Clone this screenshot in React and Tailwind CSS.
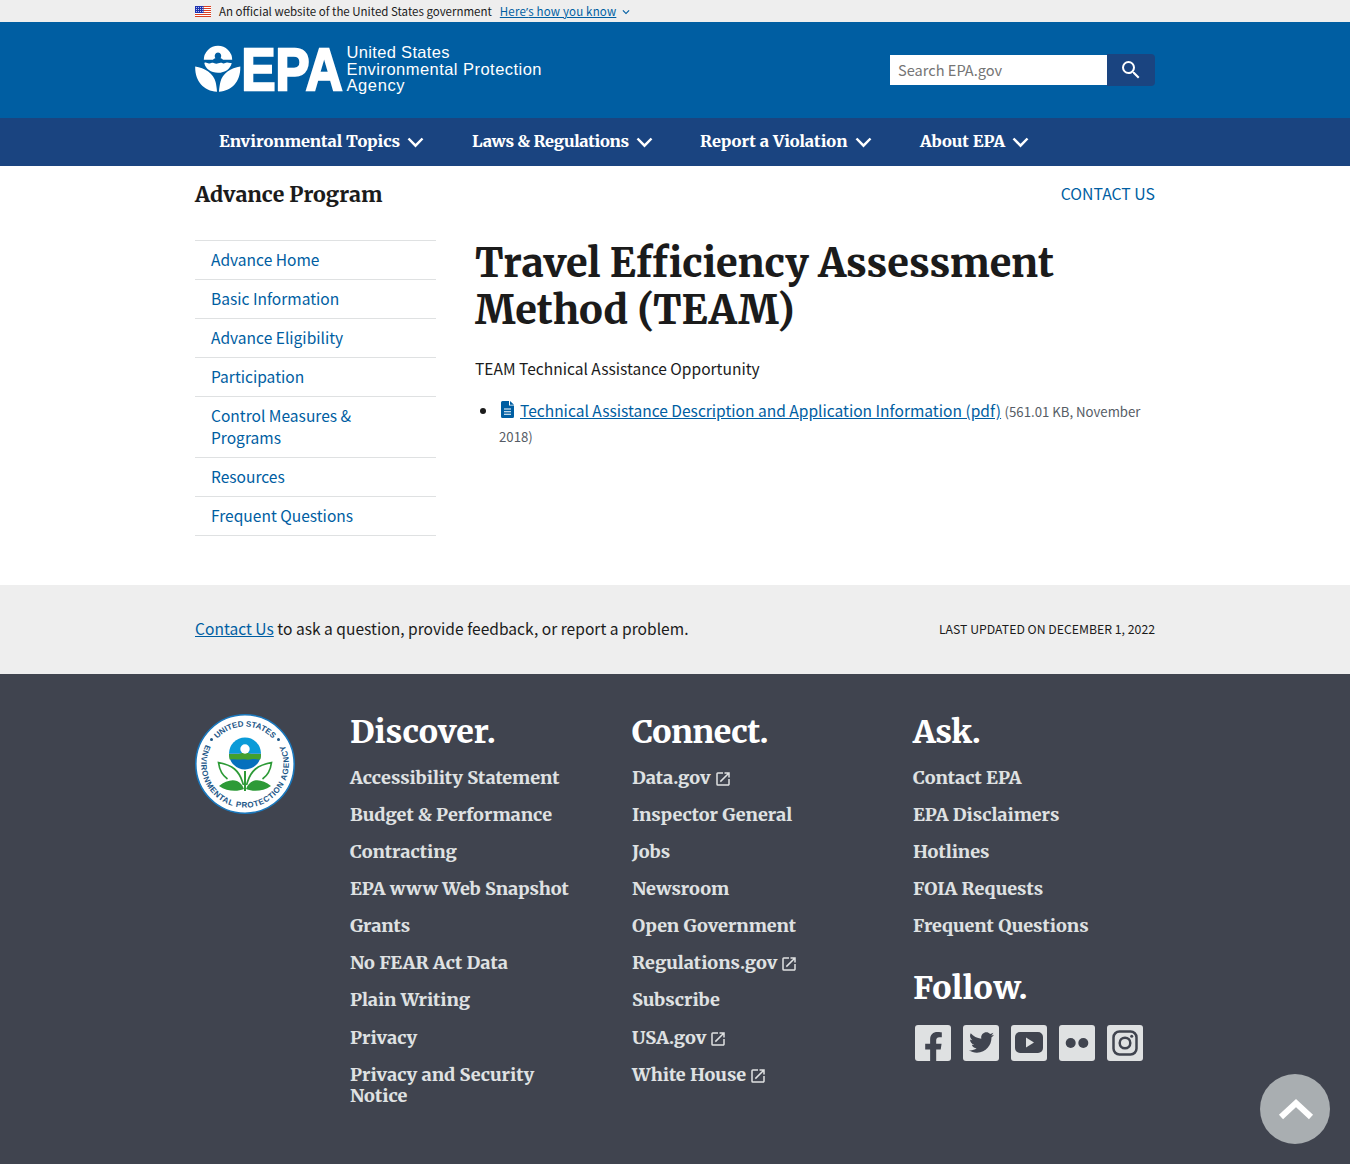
import { FaFacebookF, FaTwitter } from 'react-icons/fa';
import { MdLaunch, MdSearch, MdExpandMore } from 'react-icons/md';

const sans = 'font-["Noto_Sans_CJK_SC","Noto_Sans",sans-serif]';
const serif = 'font-[Merriweather,"DejaVu_Serif_Condensed",serif] font-extrabold';

function Flag() {
  return (
    <svg width="16" height="11" viewBox="0 0 16 11" aria-hidden="true">
      <rect width="16" height="11" fill="#fff" />
      {[0, 2, 4, 6, 8, 10].map((y) => (
        <rect key={y} y={y} width="16" height="1" fill="#db3e1f" />
      ))}
      <rect width="8.5" height="7" fill="#1e33b1" />
      {[1, 3, 5].map((y) => (
        <path key={y} d={`M1 ${y + 0.5}h7`} stroke="#fff" strokeWidth="0.8" strokeDasharray="0.9 1.1" />
      ))}
    </svg>
  );
}

function Logo() {
  return (
    <svg width="350" height="54" viewBox="195 43 350 54" role="img" aria-label="EPA" fill="#fff">
      <path d="M203.800 59.800a14.200 14 0 0 1 28.400 0h-9.200c-.6-1.100-1.300-1.500-2.400-1.600 1.500-2.400.2-5.600-2.600-5.600s-4.100 3.200-2.600 5.600c-1.100.1-1.800.5-2.400 1.600z" />
      <path d="M204.300 63c2-1.300 3.100.9 5.200.5s2.400-1.200 4.200-.5 3 .9 4.600.3 2.600-.8 4.400-.1 3-.9 4.500-.6 2.500.6 4.500.3c-1.300 6-6.600 9.800-13.700 9.800s-12.500-3.700-13.700-9.700z" />
      <path d="M195.200 66.500c9.300 1.200 18.600 7 20.400 15.500.7 3.100 1.200 6 1.400 9.800-13.600-1-22.200-11-21.800-25.300zM240.300 66.500c-9.300 1.200-18.100 7-19.900 15.500-.7 3.100-1.200 6-1.400 9.800 13.600-1 21.700-11 21.300-25.300z" />
      <text x="241.500" y="89.800" fontFamily="'Liberation Sans', Arial, sans-serif" fontWeight="700" fontSize="60" stroke="#fff" strokeWidth="2.400" textLength="101" lengthAdjust="spacingAndGlyphs">EPA</text>
      <g fontFamily="'Liberation Sans', Arial, sans-serif" fontSize="16.500">
        <text x="346.500" y="58.300" textLength="103">United States</text>
        <text x="346.500" y="74.700" textLength="195">Environmental Protection</text>
        <text x="346.500" y="91.200" textLength="58">Agency</text>
      </g>
    </svg>
  );
}

function Seal() {
  return (
    <svg width="100" height="100" viewBox="0 0 100 100" role="img" aria-label="EPA seal">
      <defs>
        <path id="seal-top" d="M12.500 50a37.500 37.500 0 0 1 75 0" />
        <path id="seal-bottom" d="M17.500 20.500A43.800 43.800 0 1 0 82.500 20.500" />
      </defs>
      <circle cx="50" cy="50" r="49.200" fill="#fff" stroke="#1a78bd" strokeWidth="1.600" />
      <g fontFamily="'Liberation Sans', Arial, sans-serif" fontWeight="700" fontSize="8" fill="#1c5687">
        <text textAnchor="middle" letterSpacing="0"><textPath href="#seal-top" startOffset="50%">UNITED STATES</textPath></text>
        <text textAnchor="middle" letterSpacing="0.560"><textPath href="#seal-bottom" startOffset="50%">ENVIRONMENTAL PROTECTION AGENCY</textPath></text>
      </g>
      <circle cx="16.500" cy="25.500" r="1.500" fill="#1c5687" />
      <circle cx="83.500" cy="25.500" r="1.500" fill="#1c5687" />
      <path d="M34 39.500a16 16 0 0 1 32 0z" fill="#0a9bd8" />
      <path d="M34 39.500a16 16 0 0 0 32 0z" fill="#0670bd" />
      <path d="M34 40h10l6-2 6 2h10q0 3-.6 5.300c-3 .8-5-.8-8-.2s-5 .8-8 .2-5 .6-8 .2-5-.4-6.800 0Q34 42 34 40z" fill="#43a02e" />
      <circle cx="50" cy="35" r="4.700" fill="#fff" />
      <path d="M49 57h2v20h-2z" fill="#2d9a37" />
      <path d="M48.500 71c-2-5-2-10-9-16-5-4-11-5.500-16-6.500 1 8 4 13 9 16.500M51.500 71c2-5 2-10 9-16 5-4 11-5.500 16-6.500-1 8-4 13-9 16.500" fill="#fff" stroke="#2d9a37" strokeWidth="1.700" />
      <path d="M49 75c-7 3-17 2.500-25-3 6-5 13-7 18-5 3 1.500 5.500 4 7 8zM51 75c7 3 17 2.500 25-3-6-5-13-7-18-5-3 1.500-5.500 4-7 8z" fill="#2d9a37" />
    </svg>
  );
}

function Chevron() {
  return (
    <svg width="17" height="11" viewBox="0 0 17 11" className="mt-px" aria-hidden="true">
      <path d="M1.500 1.500 8.500 8.700l7-7.200" fill="none" stroke="#fff" strokeWidth="2.500" />
    </svg>
  );
}

const nav = [
  ['Environmental Topics', 'w-[181px] tracking-[-0.02px]', 'mr-[48px]'],
  ['Laws & Regulations', 'w-[157px] tracking-[-0.25px]', 'mr-[47px]'],
  ['Report a Violation', 'w-[148px]', 'mr-[48px]'],
  ['About EPA', 'w-[85px]', ''],
];
const side = ['Advance Home', 'Basic Information', 'Advance Eligibility', 'Participation', 'Control Measures & Programs', 'Resources', 'Frequent Questions'];
const columns = [
  { title: 'Discover.', spacing: '', links: ['Accessibility Statement', 'Budget & Performance', 'Contracting', 'EPA www Web Snapshot', 'Grants', 'No FEAR Act Data', 'Plain Writing', 'Privacy', 'Privacy and Security Notice'] },
  { title: 'Connect.', spacing: 'tracking-[-0.5px]', links: ['Data.gov', 'Inspector General', 'Jobs', 'Newsroom', 'Open Government', 'Regulations.gov', 'Subscribe', 'USA.gov', 'White House'] },
  { title: 'Ask.', spacing: 'tracking-[-0.4px]', links: ['Contact EPA', 'EPA Disclaimers', 'Hotlines', 'FOIA Requests', 'Frequent Questions'] },
];
const external = new Set(['Data.gov', 'Regulations.gov', 'USA.gov', 'White House']);

function FooterHeading({ children, spacing }) {
  return <h2 className={`${serif} ${spacing} text-[32px] leading-[40px] text-white`}>{children}</h2>;
}

function FooterColumn({ title, spacing, links }) {
  return (
    <div>
      <FooterHeading spacing={spacing}>{title}</FooterHeading>
      <ul className={`${serif} mt-[15px] flex flex-col gap-[15.880px] text-[18px] leading-[21.200px] text-[#dfe1e2]`}>
        {links.map((l) => (
          <li key={l}>
            <a href="#" className="flex items-center">
              {l}
              {external.has(l) && <MdLaunch size={18} className="ml-[3px] mt-[3px]" />}
            </a>
          </li>
        ))}
      </ul>
    </div>
  );
}

function Social() {
  const tile = 'flex size-[36px] items-center justify-center rounded-[3px] bg-[#dfe1e2] text-[#40444f]';
  return (
    <div className="ml-[2px] mt-[17px] flex gap-3">
      <a href="#" aria-label="Facebook" className={`${tile} overflow-hidden`}><FaFacebookF size={31} className="mt-[9px]" /></a>
      <a href="#" aria-label="Twitter" className={tile}><FaTwitter size={25} /></a>
      <a href="#" aria-label="YouTube" className={tile}>
        <svg width="28" height="21" viewBox="0 0 28 21"><rect width="28" height="21" rx="5" fill="currentColor" /><path d="m11 5.500 8 5-8 5z" fill="#dfe1e2" /></svg>
      </a>
      <a href="#" aria-label="Flickr" className={tile}>
        <svg width="24" height="12" viewBox="0 0 24 12" fill="currentColor"><circle cx="5.700" cy="6" r="5" /><circle cx="18.300" cy="6" r="5" /></svg>
      </a>
      <a href="#" aria-label="Instagram" className={tile}>
        <svg width="26" height="26" viewBox="0 0 26 26" fill="none" stroke="currentColor" strokeWidth="2.500"><rect x="1.500" y="1.500" width="23" height="23" rx="6" /><circle cx="13" cy="13" r="5.300" /><circle cx="19.700" cy="6.300" r="1.500" fill="currentColor" stroke="none" /></svg>
      </a>
    </div>
  );
}

export default function App() {
  return (
    <div className={`${sans} min-h-[1164px] bg-white text-[15.560px] text-[#1b1b1b]`}>
      <div className="h-[22px] bg-[#eeeeee]">
        <div className="mx-auto flex h-full w-[960px] items-center text-[11.500px]">
          <Flag />
          <span className="ml-2 mt-px">An official website of the United States government</span>
          <a href="#" className="ml-2 mt-px tracking-[0.180px] text-[#005ea2] underline">Here<span className="font-['Noto_Sans']">’</span>s how you know</a>
          <MdExpandMore size={14} className="ml-[3px] mt-0.5 text-[#005ea2]" stroke="currentColor" />
        </div>
      </div>
      <header className="h-[96px] bg-[#005ea2]">
        <div className="mx-auto flex w-[960px] items-start justify-between">
          <a href="#" className="mt-[21px]"><Logo /></a>
          <form className="mt-8 flex h-8 w-[265px]">
            <input className="my-px h-[30px] w-[217px] bg-white px-2 pb-0.5 text-[14.600px] outline-none placeholder:text-[#757575]" placeholder="Search EPA.gov" />
            <button type="button" aria-label="Search" className="flex flex-1 items-center justify-center rounded-r bg-[#1a4480] text-white"><MdSearch size={24} /></button>
          </form>
        </div>
      </header>
      <nav className="h-12 bg-[#1a4480]">
        <div className={`${serif} mx-auto flex h-full w-[960px] items-center pl-6 text-[16.400px] text-white`}>
          {nav.map(([label, w, gap]) => (
            <a key={label} href="#" className={`flex items-center ${gap}`}>
              <span className={`${w} whitespace-nowrap pb-0.5`}>{label}</span>
              <span className="ml-[7px]"><Chevron /></span>
            </a>
          ))}
        </div>
      </nav>
      <div className="mx-auto flex h-[56px] w-[960px] items-center justify-between">
        <h2 className={`${serif} pt-0.5 text-[21.200px]`}>Advance Program</h2>
        <a href="#" className="text-[15.800px] text-[#005ea2]">CONTACT US</a>
      </div>
      <div className="mx-auto flex h-[363px] w-[960px] pt-[18px]">
        <ul className="w-[241px] self-start border-b border-[#dfe1e2]">
          {side.map((s) => (
            <li key={s} className="border-t border-[#dfe1e2] pb-[9px] pl-4 pr-16 pt-[7px] leading-[22px] text-[#005ea2]"><a href="#">{s}</a></li>
          ))}
        </ul>
        <main className="ml-[39px] flex-1">
          <h1 className={`${serif} text-[39.500px] leading-[47px]`}>Travel Efficiency Assessment Method (TEAM)</h1>
          <p className="mt-[22px] leading-[25px]">TEAM Technical Assistance Opportunity</p>
          <ul className="mt-[17px] list-disc pl-6 leading-[25px]">
            <li>
              <svg width="13" height="17" viewBox="0 0 13 17" className="-mt-1 mb-[2px] ml-[2px] mr-1.5 inline-block" aria-hidden="true">
                <path d="M1.500 0H8v4.500h5V15.500a1.500 1.500 0 0 1-1.500 1.500h-10A1.500 1.500 0 0 1 0 15.500v-14A1.500 1.500 0 0 1 1.500 0zM9 0l4 3.700H9z" fill="#005ea2" />
                <path d="M3 8h7M3 10.700h7M3 13.300h7" stroke="#fff" strokeWidth="1.100" />
              </svg>
              <a href="#" className="text-[#005ea2] underline">Technical Assistance Description and Application Information (pdf)</a>{' '}
              <span className="text-[13.200px] leading-[22px] text-[#565c65]">(561.01 KB, November 2018)</span>
            </li>
          </ul>
        </main>
      </div>
      <div className="h-[89px] bg-[#eeeeee]">
        <div className="mx-auto flex h-full w-[960px] items-center justify-between">
          <p className="pb-0.5 tracking-[0.02px]"><a href="#" className="text-[#005ea2] underline">Contact Us</a> to ask a question, provide feedback, or report a problem.</p>
          <p className="text-[12.270px]">LAST UPDATED ON DECEMBER 1, 2022</p>
        </div>
      </div>
      <footer className="h-[490px] bg-[#40444f] pt-[38px]">
        <div className="mx-auto grid w-[960px] grid-cols-[155px_282px_281px_242px]">
          <div className="pt-0.5"><Seal /></div>
          <div className="w-[242px]"><FooterColumn {...columns[0]} /></div>
          <div className="w-[242px]"><FooterColumn {...columns[1]} /></div>
          <div>
            <FooterColumn {...columns[2]} />
            <div className="mt-[31px]"><FooterHeading spacing="tracking-[0.4px]">Follow.</FooterHeading></div>
            <Social />
          </div>
        </div>
      </footer>
      <button type="button" aria-label="Back to top" className="fixed bottom-5 right-5 flex size-[70px] items-center justify-center rounded-full bg-[#a9aeb1]">
        <svg width="38" height="24" viewBox="0 0 38 24" className="ml-0.5"><path d="M4 20 19 6l15 14" fill="none" stroke="#fff" strokeWidth="6" /></svg>
      </button>
    </div>
  );
}
